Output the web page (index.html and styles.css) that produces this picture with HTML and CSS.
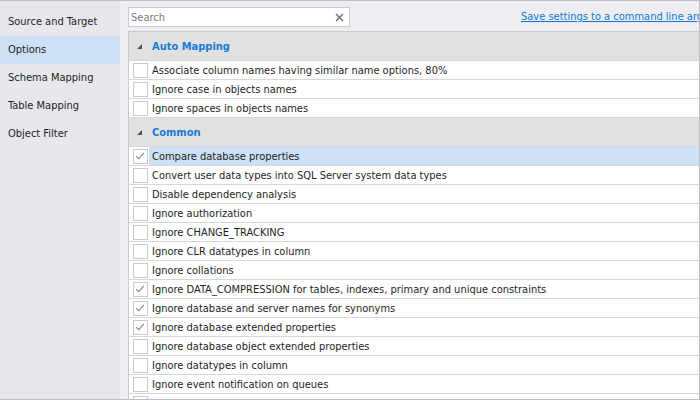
FILE: index.html
```html
<!DOCTYPE html>
<html>
<head>
<meta charset="utf-8">
<link rel="stylesheet" href="styles.css">
</head>
<body>
<div class="app">
  <nav class="sidebar">
    <div class="nav-item">Source and Target</div>
    <div class="nav-item selected">Options</div>
    <div class="nav-item">Schema Mapping</div>
    <div class="nav-item">Table Mapping</div>
    <div class="nav-item">Object Filter</div>
  </nav>
  <main class="main">
    <div class="toolbar">
      <div class="search">
        <span class="placeholder">Search</span>
        <svg class="clear" width="9" height="9" viewBox="0 0 9 9"><path d="M1 1L8 8M8 1L1 8" stroke="#6e6e6e" stroke-width="1.4"/></svg>
      </div>
      <a class="link" href="#">Save settings to a command line argument</a>
    </div>
    <div class="grid">
      <div class="group"><span class="tri"></span><span class="group-title">Auto Mapping</span></div>
      <div class="row"><span class="cb"></span><span class="txt">Associate column names having similar name options, 80%</span></div>
      <div class="row"><span class="cb"></span><span class="txt">Ignore case in objects names</span></div>
      <div class="row"><span class="cb"></span><span class="txt">Ignore spaces in objects names</span></div>
      <div class="group"><span class="tri"></span><span class="group-title">Common</span></div>
      <div class="row sel"><span class="cb on"></span><span class="txt">Compare database properties</span></div>
      <div class="row"><span class="cb"></span><span class="txt">Convert user data types into SQL Server system data types</span></div>
      <div class="row"><span class="cb"></span><span class="txt">Disable dependency analysis</span></div>
      <div class="row"><span class="cb"></span><span class="txt">Ignore authorization</span></div>
      <div class="row"><span class="cb"></span><span class="txt">Ignore CHANGE_TRACKING</span></div>
      <div class="row"><span class="cb"></span><span class="txt">Ignore CLR datatypes in column</span></div>
      <div class="row"><span class="cb"></span><span class="txt">Ignore collations</span></div>
      <div class="row"><span class="cb on"></span><span class="txt">Ignore DATA_COMPRESSION for tables, indexes, primary and unique constraints</span></div>
      <div class="row"><span class="cb on"></span><span class="txt">Ignore database and server names for synonyms</span></div>
      <div class="row"><span class="cb on"></span><span class="txt">Ignore database extended properties</span></div>
      <div class="row"><span class="cb"></span><span class="txt">Ignore database object extended properties</span></div>
      <div class="row"><span class="cb"></span><span class="txt">Ignore datatypes in column</span></div>
      <div class="row"><span class="cb"></span><span class="txt">Ignore event notification on queues</span></div>
      <div class="row"><span class="cb"></span><span class="txt">Ignore file groups, partition schemes and partition functions</span></div>
    </div>
  </main>
</div>
</body>
</html>
```
FILE: styles.css
```css
* { box-sizing: border-box; }
html, body { margin: 0; padding: 0; }
body {
  font-family: "DejaVu Sans Condensed", "DejaVu Sans", sans-serif;
  font-size: 11px;
  color: #1e1e1e;
  background: #eeeef2;
}
.app {
  width: 700px;
  height: 400px;
  display: flex;
  border-top: 1px solid #bdbdc4;
  border-right: 1px solid #bdbdc4;
  border-bottom: 1px solid #bdbdc4;
  overflow: hidden;
  background: #eeeef2;
}
.sidebar {
  width: 120px;
  flex: none;
  background: #e8e8ec;
  padding-top: 7px;
}
.nav-item {
  height: 28px;
  line-height: 28px;
  padding-left: 8px;
  color: #1e1e1e;
  white-space: nowrap;
}
.nav-item.selected { background: #cde0f5; }
.main {
  flex: 1;
  min-width: 0;
  padding-left: 8px;
  display: flex;
  flex-direction: column;
}
.toolbar {
  height: 30px;
  flex: none;
  display: flex;
  align-items: flex-start;
  padding-top: 6px;
  white-space: nowrap;
}
.search {
  width: 222px;
  height: 20px;
  flex: none;
  background: #fff;
  border: 1px solid #cbcbd3;
  display: flex;
  align-items: center;
  justify-content: space-between;
  padding: 0 5px 0 2px;
}
.placeholder { color: #7a7a7a; }
.link {
  margin-left: 171px;
  margin-top: 3px;
  color: #1076d0;
  text-decoration: underline;
  white-space: nowrap;
}
.grid {
  flex: 1;
  border-top: 1px solid #cacad2;
  border-left: 1px solid #cacad2;
  background: #fff;
  overflow: hidden;
}
.group {
  height: 29px;
  background: #e1e1e1;
  border-bottom: 1px solid #d6d6de;
  display: flex;
  align-items: center;
  padding-top: 1px;
}
.tri {
  width: 0; height: 0;
  margin-left: 8px;
  margin-right: 10px;
  border-left: 5px solid transparent;
  border-bottom: 5px solid #555;
}
.group-title {
  font-weight: bold;
  color: #1a7bd3;
  font-size: 11px;
}
.row {
  height: 19px;
  border-bottom: 1px solid #d6d6de;
  display: flex;
  align-items: stretch;
  white-space: nowrap;
}
.cb {
  width: 20px;
  flex: none;
  position: relative;
}
.cb::before {
  content: "";
  position: absolute;
  left: 4px; top: 2px;
  width: 13px; height: 13px;
  border: 1px solid #c9c9d0;
  background: #fff;
}
.cb.on::after {
  content: "";
  position: absolute;
  left: 9px; top: 4px;
  width: 3px; height: 7px;
  border-right: 1.5px solid #7a7a7a;
  border-bottom: 1.5px solid #7a7a7a;
  transform: rotate(40deg);
}
.txt {
  flex: 1;
  padding-left: 3px;
  padding-top: 1px;
  line-height: 17px;
}
.row.sel .txt { background: #cce0f6; }
```
